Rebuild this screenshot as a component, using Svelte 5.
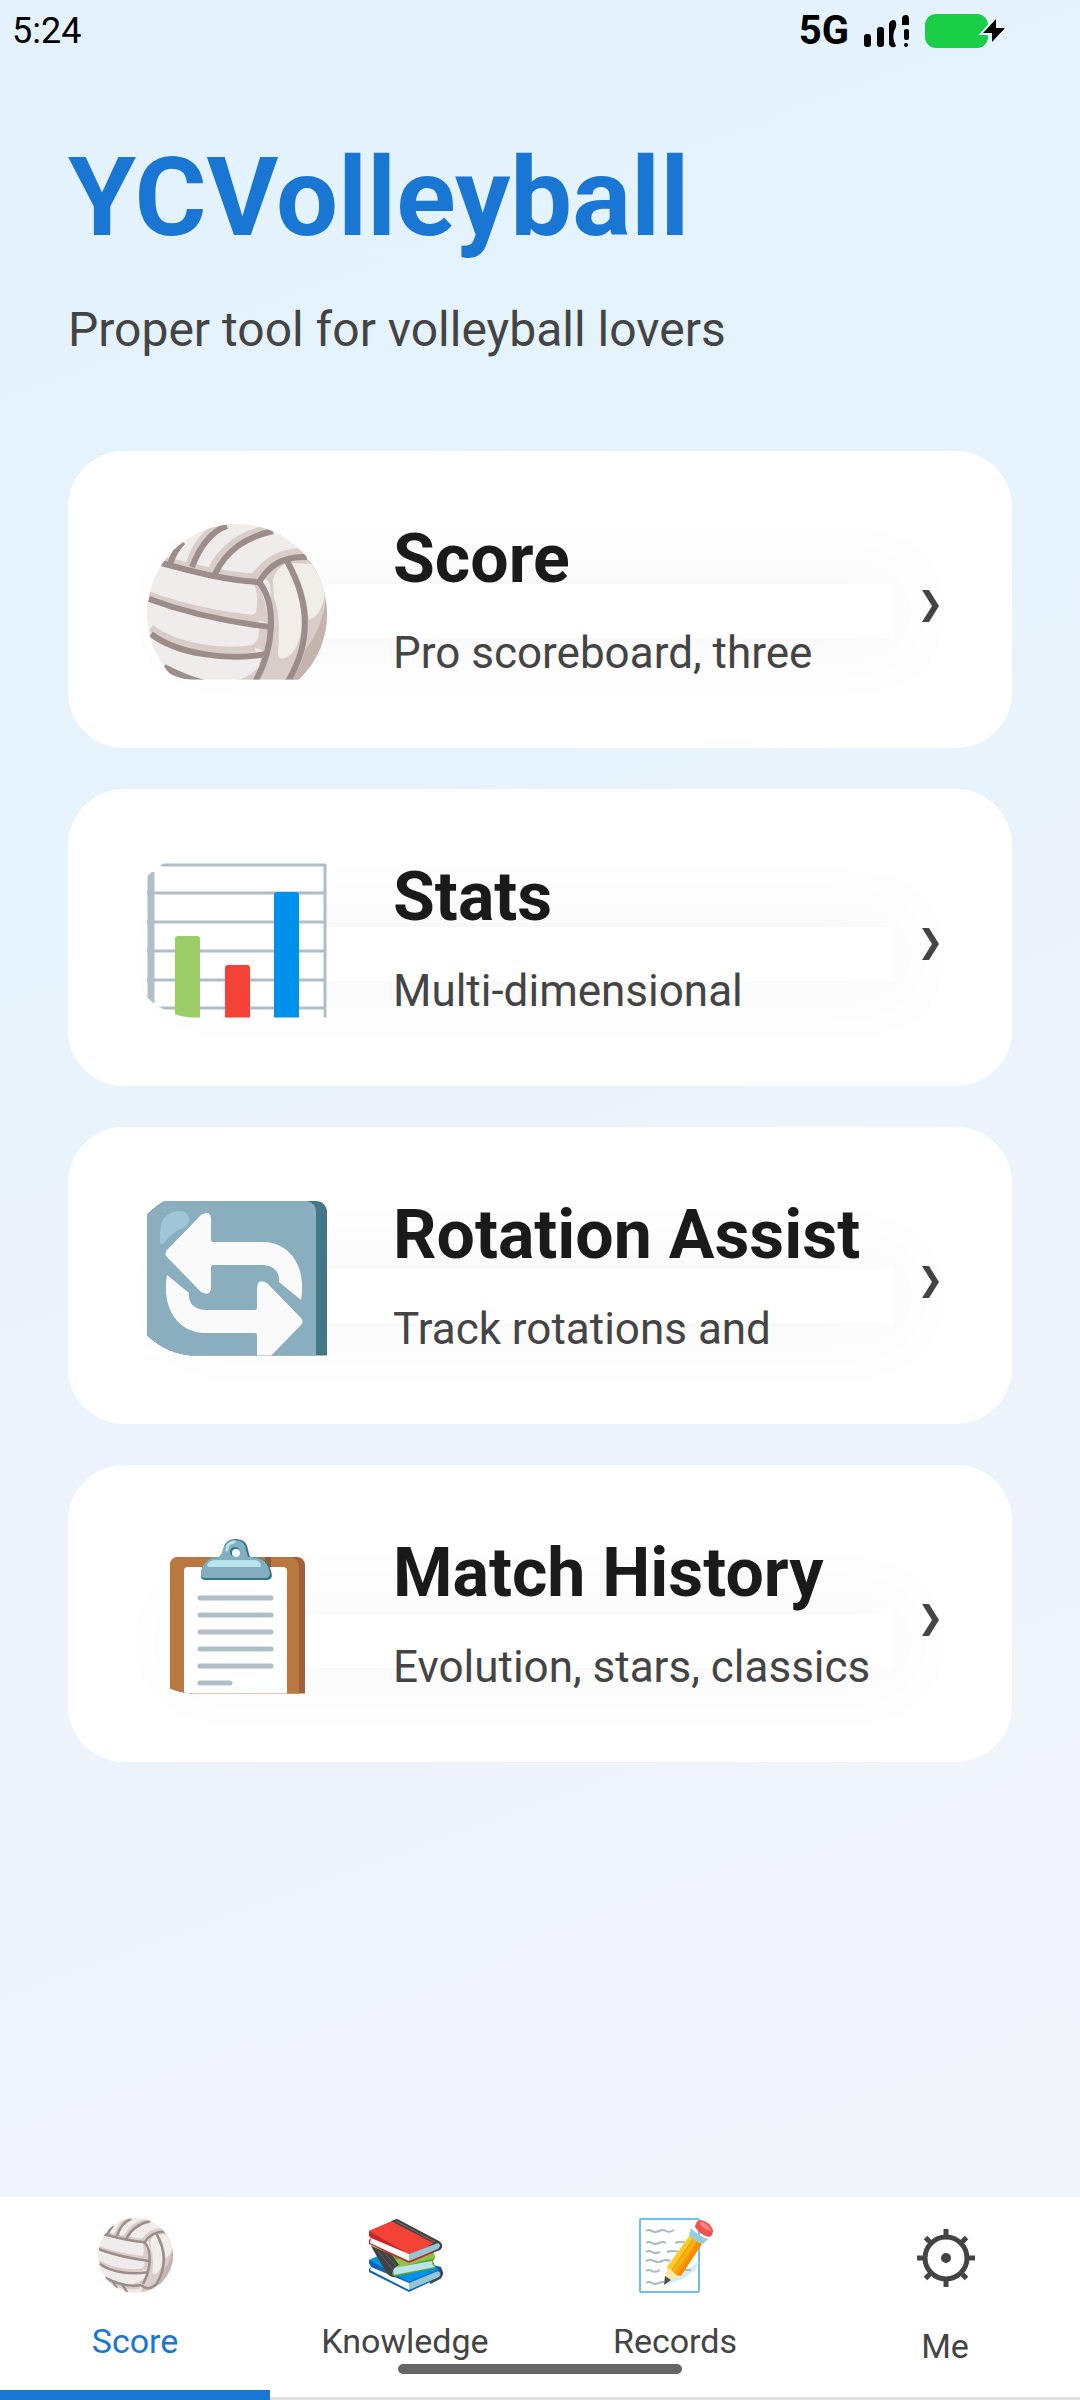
<script lang="ts">
  type IconName = "ball" | "chart" | "rotate" | "clipboard" | "books" | "memo" | "gear";

  interface Feature {
    title: string;
    text: string;
    icon: IconName;
    glow: number;
  }

  interface Tab {
    label: string;
    icon: IconName;
  }

  const features: Feature[] = [
    { title: "Score", text: "Pro scoreboard, three", icon: "ball", glow: 133 },
    { title: "Stats", text: "Multi-dimensional", icon: "chart", glow: 138 },
    { title: "Rotation Assist", text: "Track rotations and", icon: "rotate", glow: 142 },
    { title: "Match History", text: "Evolution, stars, classics", icon: "clipboard", glow: 149 },
  ];

  const tabs: Tab[] = [
    { label: "Score", icon: "ball" },
    { label: "Knowledge", icon: "books" },
    { label: "Records", icon: "memo" },
    { label: "Me", icon: "gear" },
  ];

  const seams = [
    "M14 39 C45 47 75 56 112 58 C122 42 135 32 160 33",
    "M2 75 C40 89 80 98 124 103",
    "M4 110 C30 130 80 137 119 130",
    "M112 58 C130 80 127 125 108 158",
    "M17 143 C45 158 75 166 104 161",
    "M140 37 C164 80 164 120 140 159 C125 172 112 170 104 161",
    "M45 43 C52 25 62 8 80 2",
    "M68 50 C80 25 100 13 126 7",
    "M23 40 C26 31 30 24 36 18",
    "M36 152 L46 170 M58 160 L70 178",
  ];

  const noteLines = [60, 77, 94, 111, 128];

  let active = $state("Score");
</script>

{#snippet ball()}
  <clipPath id="ball-edge"><circle cx="90" cy="90" r="90" /></clipPath>
  <g clip-path="url(#ball-edge)">
    <rect width="180" height="180" fill="#f0eceb" />
    <path d="M112 58 C134 40 120 110 108 158 L104 180 H180 V0 L168 36 L136 36Z" fill="#d8cdc9" />
    <path d="M126 56 Q128 46 138 40 Q155 72 155 94 Q155 120 142 132 Q132 138 131 130 Q134 90 127 74Z" fill="#f1eeea" />
    <path d="M144 39 L164 40 Q180 62 177 76 Q173 92 162 96 Q160 66 144 39Z" fill="#f1eeea" />
    <path d="M180 68 Q176 104 158 126 Q155 142 142 160 L160 158 L182 110Z" fill="#c5b3ae" />
    <path d="M112 58 Q101 58 108 62 Q112 75 109 88 Q105 94 92 90 L124 100Z M124 104 L112 103 Q113 117 104 122 L120 128Z M119 132 Q106 155 88 156 L80 164 L108 160Z" fill="#d8cdc9" />
    <g fill="none" stroke="#d8cdc9" stroke-width="7">
      <path d="M2 71 C40 85 80 92 112 95" />
      <path d="M4 104 C30 124 80 130 108 124" />
      <path d="M16 36 C45 43 75 51 107 53 C119 36 135 26 162 28" />
      <path d="M64 46 C76 22 98 9 122 4 M42 40 C48 23 59 6 76 0" />
      <path d="M24 152 C45 163 75 172 100 166" />
    </g>
    <g fill="none" stroke="#9c8d8b" stroke-width="6">
      {#each seams as d}
        <path {d} />
      {/each}
    </g>
  </g>
{/snippet}

{#snippet chart()}
  <rect width="180" height="180" y="2" fill="#fff" />
  <path d="M0 3H179M0 31H179M0 60H179M0 89H179M0 118H179M0 146H179" stroke="#b0bec5" stroke-width="3" />
  <path d="M4 9V143" stroke="#b0bec5" stroke-width="7" />
  <path d="M178 2V160" stroke="#b0bec5" stroke-width="3" />
  <path d="M2 4 H15 V6 H8 V10 H2Z M7 141 H12 V144 H8Z" fill="#fff" />
  <rect x="28" y="74" width="25" height="90" rx="3" fill="#9ccc65" />
  <rect x="78" y="103" width="25" height="70" rx="3" fill="#f44336" />
  <rect x="127" y="30" width="25" height="140" rx="3" fill="#0091ea" />
{/snippet}

{#snippet arrow()}
  <path
    d="M20 50 L54 15 Q63 10 64 18 V40 Q64 42 66 42 H116 C142 42 160 66 154 100 L132 82 C133 71 126 65 114 65 H66 Q64 65 64 67 V88 Q63 97 54 92 L20 57 Q17 54 20 50Z"
    fill="#fafafa"
  />
{/snippet}

{#snippet rotate()}
  <rect x="-20" y="1" width="200" height="180" rx="11" fill="#437687" />
  <path d="M-20 1 H160 Q169 3 169 12 V160 H-20Z" fill="#8baebf" />
  <path d="M13 42 Q12 22 19 16 Q28 9 38 12 Q43 16 42 21 Q41 27 31 30 Q23 35 18 42 Q14 46 13 42Z" fill="#9fc6d6" />
  {@render arrow()}
  <g transform="rotate(180 87 87.5)">{@render arrow()}</g>
{/snippet}

{#snippet clipboard()}
  <rect x="23" y="19" width="135" height="160" rx="8" fill="#a35f3a" />
  <path d="M31 19 H144 Q152 21 152 29 V160 H52 L23 152 V27 Q24 19 31 19Z" fill="#b9783f" />
  <path d="M118 19 H124 V32 H118Z" fill="#8e5c35" />
  <path d="M41 29 H136 Q140 29 140 33 V160 H37 V33 Q37 29 41 29Z" fill="#fff" />
  <path d="M54 38 Q54 28 59 24 Q64 19 72 19 Q75 17 76 12 Q78 1 88 1 Q100 1 101 12 L103 19 Q113 19 118 23 Q124 28 125 38 Q124 42 120 42 H58 Q54 42 54 38Z" fill="#2f7889" />
  <path d="M54 37 Q54 28 59 24 Q64 19 72 19 Q75 17 76 12 Q78 2 88 2 Q98 2 99 12 L101 19 Q113 19 118 24 Q122 28 123 36 Q122 40 118 40 H58 Q54 40 54 37Z" fill="#82aec0" />
  <path d="M60 27 Q62 22 69 22 H108 Q114 23 114 29 H61Z" fill="#b9e4ea" />
  <path d="M80 12 Q80 5 87 4" fill="none" stroke="#b9e4ea" stroke-width="3" stroke-linecap="round" />
  <circle cx="88" cy="14" r="5" fill="#2f7889" />
  <circle cx="89" cy="15" r="4" fill="#fff" />
  <g stroke="#b0bec5" stroke-width="5" stroke-linecap="round">
    {#each noteLines as y}
      <path d="M53 {y}H124" />
    {/each}
    <path d="M53 145H83" />
  </g>
{/snippet}

{#snippet books()}
  <path d="M1 42 L24 36 L73 49 Q76 55 73 59 L41 74 L1 54 V51 L3 49 L1 45Z" fill="#0d66b5" />
  <path d="M1 42 L12 37 L72 51 L41 64Z" fill="#0091ea" />
  <path d="M3 49 L41 65 V72 L2 52Z" fill="#fafafa" />
  <path d="M41 65 L70 53 Q74 55 71 59 L41 72Z" fill="#94c6d6" />
  <path d="M70 50 Q77 54 72 60 L62 65" fill="none" stroke="#424242" stroke-width="2" />
  <path d="M3 28 L26 36 L66 35 L67 40 L65 43 L68 50 L25 59 Q19 57 17 52Z" fill="#689f38" />
  <path d="M25 42 L66 35 L67 40 L28 50Z" fill="#8bc34a" />
  <path d="M25 50 L64 43 Q64 47 67 49 L26 57Z" fill="#b9e4ea" />
  <path d="M3 28 L24 37 L31 47 Q24 50 24 57 L28 59 Q22 60 18 54Z" fill="#424242" />
  <path d="M10 33 L25 52 M15 33 L28 48" stroke="#616161" />
  <path d="M1 13 L29 1 L72 24 Q76 28 72 32 L41 45 L1 26 V22 L3 20 L1 18Z" fill="#c62828" />
  <path d="M1 13 L25 3 L66 26 L41 36Z" fill="#f44336" />
  <path d="M23 3 L29 1 L71 23 Q77 27 72 32 L62 35 L60 28 L66 25Z" fill="#424242" />
  <path d="M28 3 L67 24" stroke="#757575" stroke-width="1" />
  <path d="M3 20 L41 36 V43 L2 25Z" fill="#fafafa" />
  <path d="M41 36 L70 25 Q74 27 70 31 L41 43Z" fill="#94c6d6" />
{/snippet}

{#snippet memo()}
  <rect x="2" y="1" width="59" height="73" rx="1" fill="#fff" stroke="#6fbff5" stroke-width="2" />
  <path d="M61 44 L58 51 Q45 64 28 66 L44 54Z" fill="#d3ebfb" />
  <g fill="none" stroke="#a9b9c2" stroke-width="2">
    <path d="M8 13 q3 -2 6 0 t7 0 t7 0 t8 -1" />
    <path d="M8 25 q3 -2 6 0 t7 0 t7 0 M37 25 q5 -2 12 0" />
    <path d="M8 34 q3 -2 6 0 t8 0 M29 34 q5 -2 12 0" />
    <path d="M8 43 q4 -2 8 0 t8 0 t8 0" />
    <path d="M8 53 q3 -2 6 0 t8 -1 M47 52 h6" />
    <path d="M8 65 q3 -2 6 0 t7 0 t7 0" />
  </g>
  <path d="M29 49 L52 17 L64 26 L42 58 L26 66Z" fill="#ffeab0" />
  <path d="M29 49 L52 17 L56 20 L34 53Z" fill="#ffca28" />
  <path d="M34 53 L56 20 L60 23 L38 57Z" fill="#ffb300" />
  <path d="M38 57 L60 23 L64 26 L43 58Z" fill="#fb8c00" />
  <path d="M34 52 L56 20 M38 55 L60 23" stroke="#d9892b" stroke-width="1" />
  <path d="M27 58 L33 62 L26 67Z" fill="#4e4e4e" />
  <path d="M53 10 Q60 18 70 21 L65 26 Q57 24 51 17Z" fill="#93cedd" />
  <path d="M57 9 Q58 2 63 2 Q72 4 75 12 Q75 18 71 19 Q62 17 57 9Z" fill="#ef5350" />
  <path d="M61 4 Q68 3 74 13 Q65 12 61 4Z" fill="#ff8080" />
{/snippet}

{#snippet gear()}
  <circle cx="38" cy="40" r="21" fill="none" stroke="#444" stroke-width="5" />
  <circle cx="38" cy="40" r="5" fill="#444" />
  <g stroke="#444" stroke-width="5">
    {#each [0, 45, 90, 135, 180, 225, 270, 315] as angle}
      <path d="M38 19V11" transform="rotate({angle} 38 40)" />
    {/each}
  </g>
{/snippet}

<div class="page">
  <div class="status">
    <span class="time">5:24</span>
    <div class="indicators">
      <span class="network">5G</span>
      <svg width="46" height="34" viewBox="0 0 46 34" aria-hidden="true">
        <rect x="0" y="20" width="7" height="13" rx="3" />
        <rect x="13" y="13" width="7" height="20" rx="3" />
        <path d="M25 10 Q26 6 30 6 Q33 7 32 13 Q28 20 30 27 L32 32 Q30 34 28 33 Q25 32 25 29Z" />
        <path d="M38 5 Q38 1 42 1 Q45 1 45 5 V11 H38Z" />
        <rect x="40" y="15" width="5" height="11" rx="2" />
        <circle cx="42" cy="31" r="2" />
      </svg>
      <svg width="82" height="34" viewBox="0 0 82 34" aria-hidden="true">
        <rect width="63" height="34" rx="11" fill="#1bce48" />
        <path d="M71 5 L58 19 H67 L67 28 L80 14 H71Z" fill="#000" stroke="#e5f2fc" stroke-width="4" paint-order="stroke" />
      </svg>
    </div>
  </div>

  <header>
    <h1>YCVolleyball</h1>
    <p>Proper tool for volleyball lovers</p>
  </header>

  <main>
    {#each features as feature}
      <button class="card" type="button">
        <span class="glow" style="top: {feature.glow}px"></span>
        <svg class="picture" viewBox="0 0 180 156" aria-hidden="true">
          {#if feature.icon === "ball"}
            {@render ball()}
          {:else if feature.icon === "chart"}
            {@render chart()}
          {:else if feature.icon === "rotate"}
            {@render rotate()}
          {:else}
            {@render clipboard()}
          {/if}
        </svg>
        <span class="copy">
          <span class="title">{feature.title}</span>
          <span class="text">{feature.text}</span>
        </span>
        <svg class="chevron" viewBox="0 0 24 40" aria-hidden="true">
          <path d="M2 8 H9 L19 24 L9 40 H2 L12 24Z" fill="#444" />
        </svg>
      </button>
    {/each}
  </main>

  <nav>
    {#each tabs as tab}
      <button
        class="tab"
        class:active={active === tab.label}
        type="button"
        onclick={() => (active = tab.label)}
      >
        {#if tab.icon === "ball"}
          <svg width="75" height="75" viewBox="0 0 180 180" aria-hidden="true">{@render ball()}</svg>
        {:else if tab.icon === "books"}
          <svg width="75" height="75" viewBox="0 0 75 75" aria-hidden="true">{@render books()}</svg>
        {:else if tab.icon === "memo"}
          <svg width="75" height="75" viewBox="0 0 75 75" aria-hidden="true">{@render memo()}</svg>
        {:else}
          <svg width="75" height="80" viewBox="0 0 75 80" aria-hidden="true">{@render gear()}</svg>
        {/if}
        <span>{tab.label}</span>
      </button>
    {/each}
    <div class="home-bar"></div>
  </nav>
</div>

<style>
  :global(body) {
    margin: 0;
  }

  .page {
    display: flex;
    flex-direction: column;
    min-height: 100vh;
    background: linear-gradient(160deg, #e3f2fd 0%, #e5f3fc 25%, #ebf3fc 50%, #f5f5fa 100%);
    color: #444;
    font-family: Roboto, "Liberation Sans", sans-serif;
  }

  button {
    border: 0;
    margin: 0;
    color: inherit;
    font-family: inherit;
    cursor: pointer;
  }

  svg {
    display: block;
    flex: none;
  }

  .status {
    display: flex;
    align-items: center;
    justify-content: space-between;
    height: 62px;
    padding: 0 73px 0 12px;
    color: #000;
  }

  .time {
    font-size: 36px;
    line-height: 42px;
  }

  .indicators {
    display: flex;
    align-items: center;
    gap: 15px;
  }

  .network {
    font-family: "Liberation Sans Narrow", Roboto, sans-serif;
    font-size: 40px;
    font-weight: 700;
    line-height: 42px;
  }

  header {
    padding: 72px 68px 0;
  }

  h1 {
    margin: 0;
    color: #1976d2;
    font-size: 110px;
    font-weight: 700;
    line-height: 128px;
  }

  header p {
    margin: 38px 0 0;
    font-size: 48px;
    line-height: 60px;
  }

  main {
    display: flex;
    flex-direction: column;
    gap: 41px;
    padding: 91px 68px;
  }

  .card {
    position: relative;
    display: flex;
    align-items: center;
    padding: 68px 68px 67px 79px;
    border-radius: 56px;
    background: #fff;
    text-align: left;
  }

  .glow {
    position: absolute;
    right: 119px;
    left: 119px;
    height: 54px;
    background: #fff;
    box-shadow: 0 0 72px 16px rgba(0, 0, 0, 0.03);
  }

  .picture {
    position: relative;
    width: 180px;
    height: 156px;
    margin: 3px 66px 0 0;
    clip-path: path("M20 0 H180 V156 H44 Q20 154 0 136 V15 Q9 6 20 0Z");
  }

  .copy {
    position: relative;
    display: flex;
    flex: 1;
    flex-direction: column;
    gap: 26px;
    min-width: 0;
    white-space: nowrap;
  }

  .title {
    color: #1a1a1a;
    font-size: 68px;
    font-weight: 700;
    line-height: 80px;
  }

  .text {
    font-size: 44px;
    line-height: 56px;
  }

  .chevron {
    position: relative;
    width: 24px;
    height: 40px;
    margin-top: 3px;
  }

  nav {
    position: relative;
    display: flex;
    margin-top: auto;
    background: #fff;
  }

  .tab {
    display: flex;
    flex: 1;
    flex-direction: column;
    align-items: center;
    gap: 28px;
    padding: 21px 0 31px;
    border-bottom: 3px solid #e0e0e0;
    background: none;
    font-size: 34px;
    line-height: 40px;
  }

  .tab.active {
    padding-bottom: 24px;
    border-bottom: 10px solid #1976d2;
    color: #1976d2;
  }

  .home-bar {
    position: absolute;
    bottom: 26px;
    left: 50%;
    width: 284px;
    height: 10px;
    border-radius: 5px;
    background: #666;
    transform: translateX(-50%);
  }
</style>
